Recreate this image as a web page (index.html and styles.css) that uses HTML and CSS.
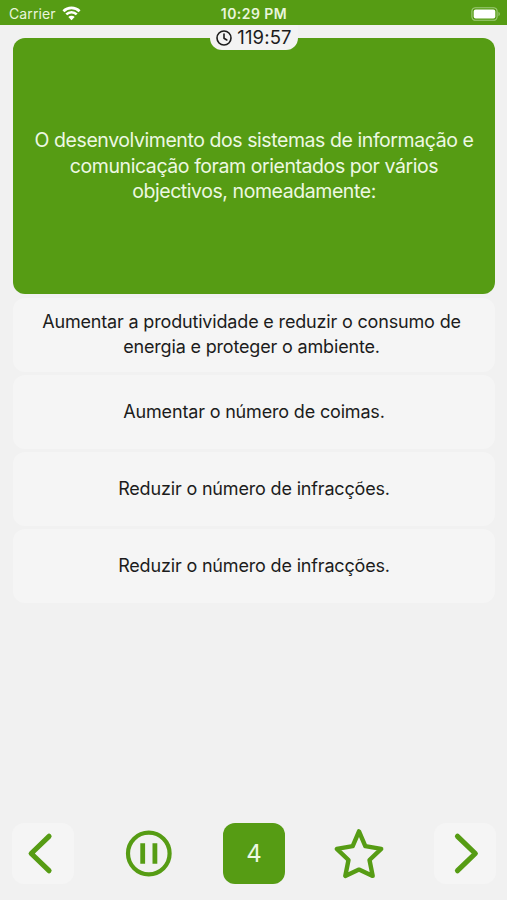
FILE: index.html
```html
<!DOCTYPE html>
<html lang="pt">
<head>
    <meta charset="UTF-8">
    <meta name="viewport" content="width=device-width, initial-scale=1.0">
    <title>Teste</title>
    <link rel="stylesheet" href="styles.css">
</head>
<body>
    <header class="status-bar">
        <div class="carrier">
            <span>Carrier</span>
            <svg class="wifi" width="19" height="15" viewBox="0 0 19 15">
                <path d="M1.4 5.2a11.6 11.6 0 0 1 16.2 0M4.3 8.4a7.4 7.4 0 0 1 10.4 0" fill="none" stroke="#fff" stroke-width="2.7"/>
                <path d="M9.5 14.3 6.3 11a4.6 4.6 0 0 1 6.4 0z" fill="#fff"/>
            </svg>
        </div>
        <span class="clock">10:29 PM</span>
        <svg class="battery" width="30" height="14" viewBox="0 0 30 14">
            <rect x="0.9" y="0.7" width="25.2" height="12.6" rx="3.6" fill="none" stroke="#9fca79" stroke-width="1.1"/>
            <rect x="2.7" y="2.4" width="21.6" height="9.2" rx="2" fill="#fff"/>
            <path d="M27.5 4.8a2.5 2.5 0 0 1 0 4.4z" fill="#9fca79"/>
        </svg>
    </header>

    <main>
        <section class="question">
            <div class="timer">
                <svg width="16" height="16" viewBox="0 0 16 16" fill="none" stroke="#1c1c1c" stroke-width="1.6" stroke-linecap="round" stroke-linejoin="round">
                    <circle cx="8" cy="8" r="7"/>
                    <path d="M8 4v4.3l2.8 1.7"/>
                </svg>
                <span>119:57</span>
            </div>
            <p>O desenvolvimento dos sistemas de informação e<br>comunicação foram orientados por vários<br>objectivos, nomeadamente:</p>
        </section>

        <div class="answers">
            <div class="answer first"><p>Aumentar a produtividade e reduzir o consumo de<br>energia e proteger o ambiente.</p></div>
            <div class="answer"><p>Aumentar o número de coimas.</p></div>
            <div class="answer"><p>Reduzir o número de infracções.</p></div>
            <div class="answer"><p>Reduzir o número de infracções.</p></div>
        </div>
    </main>

    <nav class="controls">
        <button class="arrow" aria-label="Anterior">
            <svg width="61" height="61" viewBox="0 0 61 61"><path d="M37 13.3 19.2 30.5 37 47.7"/></svg>
        </button>
        <button aria-label="Pausa">
            <svg width="61" height="61" viewBox="0 0 61 61">
                <circle class="ring" cx="30.8" cy="30.5" r="20.8"/>
                <path class="bars" d="M24.7 20.3v20.5M36.9 20.3v20.5"/>
            </svg>
        </button>
        <button class="number">4</button>
        <button aria-label="Favorito">
            <svg width="61" height="61" viewBox="0 0 61 61">
                <path class="star" d="M30 8.4 36.3 23.2 52.2 25.9 40.5 37 43.7 52.9 30 46.6 16.3 52.9 19.5 37 7.8 25.9 23.7 23.2z"/>
            </svg>
        </button>
        <button class="arrow" aria-label="Seguinte">
            <svg width="61" height="61" viewBox="0 0 61 61"><path d="M23.5 13.3 41.3 30.5 23.5 47.7"/></svg>
        </button>
    </nav>
</body>
</html>
```
FILE: styles.css
```css
* {
    box-sizing: border-box;
}

body {
    display: flex;
    flex-direction: column;
    height: 900px;
    margin: 0;
    background-color: #f1f1f1;
    font-family: Inter, "Liberation Sans", sans-serif;
    color: #1c1c1c;
}

p {
    margin: 0;
    white-space: nowrap;
}

/* Barra de estado */
.status-bar {
    display: grid;
    grid-template-columns: 1fr auto 1fr;
    align-items: center;
    height: 25px;
    padding: 2px 6px 0 9px;
    background-color: #569c14;
    color: #e9f5dc;
    font-size: 14px;
    line-height: 23px;
}

.carrier {
    display: flex;
    align-items: center;
    gap: 6px;
    letter-spacing: 0.1px;
}

.clock {
    padding-right: 2px;
    font-size: 14px;
    font-weight: 600;
    letter-spacing: 0.45px;
}

.battery {
    justify-self: end;
}

main {
    flex: 1;
    padding: 13px 12px 0 13px;
}

/* Pergunta */
.question {
    position: relative;
    display: flex;
    align-items: center;
    justify-content: center;
    height: 256px;
    padding-top: 1px;
    border-radius: 12px;
    background-color: #569c14;
    color: #edf8e2;
    font-size: 19.5px;
    line-height: 25.6px;
    letter-spacing: -0.43px;
    text-align: center;
}

.timer {
    position: absolute;
    top: -13px;
    left: 197px;
    display: flex;
    align-items: center;
    justify-content: center;
    gap: 5px;
    width: 88px;
    height: 25px;
    border-radius: 0 0 12px 12px;
    background-color: #f3f3f3;
    color: #1c1c1c;
    font-size: 18.5px;
    letter-spacing: 0.15px;
}

/* Respostas */
.answers {
    display: grid;
    gap: 3px;
    padding-top: 4px;
}

.answer {
    display: flex;
    align-items: center;
    justify-content: center;
    height: 74px;
    border-radius: 12px;
    background-color: #f5f5f5;
    font-size: 18px;
    line-height: 24.6px;
    letter-spacing: -0.17px;
    text-align: center;
}

.answer.first p {
    padding-right: 5px;
}

/* Botões de navegação */
.controls {
    display: flex;
    justify-content: space-between;
    padding: 0 11px 16px 12px;
}

.controls button {
    width: 62px;
    height: 61px;
    padding: 0;
    border: 0;
    border-radius: 12px;
    background: none;
    font-family: inherit;
}

.controls svg {
    display: block;
    fill: none;
    stroke: #569c14;
    stroke-width: 5.2;
    stroke-linecap: round;
    stroke-linejoin: round;
}

.controls .arrow {
    background-color: #f5f5f5;
}

.controls .ring {
    stroke-width: 4.2;
}

.controls .bars {
    stroke-linecap: butt;
    stroke-width: 4.8;
}

.controls .star {
    stroke-width: 4.4;
}

.controls .number {
    background-color: #569c14;
    color: #edf8e2;
    font-size: 24px;
}
```
